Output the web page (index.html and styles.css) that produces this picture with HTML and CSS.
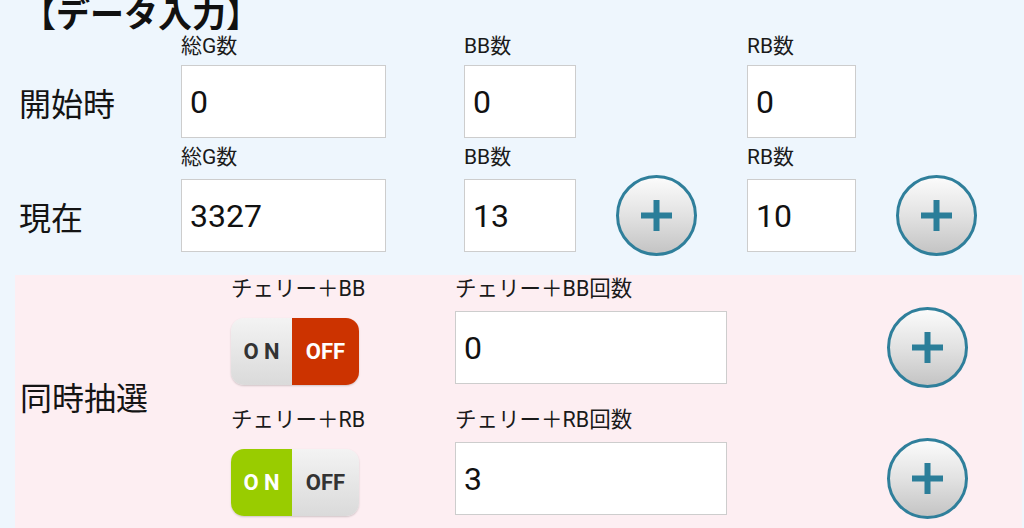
FILE: index.html
```html
<!DOCTYPE html>
<html lang="ja">
<head>
<meta charset="utf-8">
<title>データ入力</title>
<link rel="stylesheet" href="styles.css">
</head>
<body>
<div class="page">
  <h1 class="title">【データ入力】</h1>

  <section class="top">
    <div class="group g1">
      <div class="cap c2">総G数</div>
      <div class="cap c3">BB数</div>
      <div class="cap c4">RB数</div>
      <div class="rowlabel">開始時</div>
      <div class="cell"><input class="box w205" type="text" value="0" readonly></div>
      <div class="cell"><input class="box w112" type="text" value="0" readonly></div>
      <div class="cell"><input class="box w109" type="text" value="0" readonly></div>
    </div>
    <div class="group g2">
      <div class="cap c2">総G数</div>
      <div class="cap c3">BB数</div>
      <div class="cap c4">RB数</div>
      <div class="rowlabel">現在</div>
      <div class="cell"><input class="box w205" type="text" value="3327" readonly></div>
      <div class="cell">
        <input class="box w112" type="text" value="13" readonly>
        <button class="plus" type="button" aria-label="BB +1"><svg viewBox="0 0 31 31" width="31" height="31"><rect x="12.5" y="0" width="6" height="31"/><rect x="0" y="12.5" width="31" height="6"/></svg></button>
      </div>
      <div class="cell">
        <input class="box w109" type="text" value="10" readonly>
        <button class="plus" type="button" aria-label="RB +1"><svg viewBox="0 0 31 31" width="31" height="31"><rect x="12.5" y="0" width="6" height="31"/><rect x="0" y="12.5" width="31" height="6"/></svg></button>
      </div>
    </div>
  </section>

  <section class="sim">
    <div class="simlabel">同時抽選</div>

    <div class="cap s2 r1">チェリー＋BB</div>
    <div class="cap s3 r1">チェリー＋BB回数</div>
    <div class="s2 r2 tcell">
      <div class="toggle">
        <span class="half on-off">O N</span>
        <span class="half off-on">OFF</span>
      </div>
    </div>
    <div class="s3 r2 bcell"><input class="box w272" type="text" value="0" readonly></div>
    <div class="s4 r2 pcell"><button class="plus" type="button" aria-label="チェリー＋BB +1"><svg viewBox="0 0 31 31" width="31" height="31"><rect x="12.5" y="0" width="6" height="31"/><rect x="0" y="12.5" width="31" height="6"/></svg></button></div>

    <div class="cap s2 r3">チェリー＋RB</div>
    <div class="cap s3 r3">チェリー＋RB回数</div>
    <div class="s2 r4 tcell">
      <div class="toggle">
        <span class="half on-on">O N</span>
        <span class="half off-off">OFF</span>
      </div>
    </div>
    <div class="s3 r4 bcell"><input class="box w272" type="text" value="3" readonly></div>
    <div class="s4 r4 pcell"><button class="plus" type="button" aria-label="チェリー＋RB +1"><svg viewBox="0 0 31 31" width="31" height="31"><rect x="12.5" y="0" width="6" height="31"/><rect x="0" y="12.5" width="31" height="6"/></svg></button></div>
  </section>
</div>
</body>
</html>
```

FILE: styles.css
```css
html, body {
  margin: 0;
  padding: 0;
  background: #eef6fd;
  overflow: hidden;
}

body {
  font-family: Roboto, "Noto Sans CJK JP", sans-serif;
  color: #141414;
}

.page {
  width: 1024px;
}

.title {
  margin: -4px 0 0;
  padding-left: 22px;
  height: 34px;
  line-height: 34px;
  font-size: 34px;
  font-weight: 700;
  font-family: "Noto Sans CJK JP", sans-serif;
  color: #111;
  white-space: nowrap;
}

/* ---------- top section ---------- */
.group {
  display: grid;
  grid-template-columns: 181px 283px 283px 1fr;
  grid-template-rows: 20px 73px;
}

.g1 { margin-top: 6px; row-gap: 9px; }
.g2 { margin-top: 9px; row-gap: 12px; }

.cap {
  font-size: 21px;
  line-height: 20px;
  height: 20px;
  white-space: nowrap;
  color: #1a1a1a;
}

.group .c2 { grid-column: 2; grid-row: 1; }
.group .c3 { grid-column: 3; grid-row: 1; }
.group .c4 { grid-column: 4; grid-row: 1; }

.rowlabel {
  grid-column: 1;
  grid-row: 2;
  align-self: center;
  padding-left: 19px;
  font-size: 32px;
  line-height: 36px;
  font-family: "Noto Sans CJK JP", sans-serif;
}

.cell {
  grid-row: 2;
  display: flex;
  align-items: center;
}

.box {
  box-sizing: border-box;
  height: 73px;
  margin: 0;
  padding: 0 0 0 8px;
  border: 1px solid #cdcdcd;
  border-radius: 0;
  background: #fff;
  font-family: Roboto, sans-serif;
  font-size: 32px;
  color: #111;
  outline: none;
}

.w205 { width: 205px; }
.w112 { width: 112px; }
.w109 { width: 109px; }
.w272 { width: 272px; }

.plus {
  box-sizing: border-box;
  width: 81px;
  height: 81px;
  margin: 0 0 0 40px;
  padding: 0;
  border: 3px solid #2f7f9b;
  border-radius: 50%;
  background: linear-gradient(#fbfbfb, #e2e2e2 50%, #c4c4c4);
  display: flex;
  align-items: center;
  justify-content: center;
  flex: none;
}

.plus svg { fill: #2b7e99; display: block; }

/* ---------- simultaneous section ---------- */
.sim {
  margin: 23px 2px 0 15px;
  padding: 4px 0 30px;
  background: #fdeef2;
  display: grid;
  grid-template-columns: 216px 224px 432px 81px;
  grid-template-rows: auto auto auto auto;
}

.sim .r1 { grid-row: 1; }
.sim .r2 { grid-row: 2; margin-top: 8px; height: 81px; }
.sim .r3 { grid-row: 3; margin-top: 22px; }
.sim .r4 { grid-row: 4; margin-top: 8px; height: 81px; }
.sim .s2 { grid-column: 2; }
.sim .s3 { grid-column: 3; }
.sim .s4 { grid-column: 4; }

.sim .cap { font-size: 21.5px; }

.simlabel {
  grid-column: 1;
  grid-row: 1 / 5;
  align-self: center;
  padding: 0 0 6px 5px;
  font-size: 32px;
  line-height: 36px;
  font-family: "Noto Sans CJK JP", sans-serif;
}

.tcell, .bcell, .pcell {
  display: flex;
  align-items: center;
}

.pcell .plus { margin-left: 0; }

.toggle {
  display: flex;
  width: 128px;
  height: 67px;
  margin-top: 8px;
  border-radius: 13px;
  overflow: hidden;
  box-shadow: 0 1px 2px rgba(0, 0, 0, 0.18);
}

.half {
  display: flex;
  align-items: center;
  justify-content: center;
  font-family: Roboto, sans-serif;
  font-weight: 700;
  font-size: 22px;
  white-space: pre;
}

.half:first-child { width: 61px; }
.half:last-child { width: 67px; }

.on-off, .off-off {
  background: linear-gradient(#f3f3f3, #dadada);
  color: #333;
}

.off-on {
  background: #cc3300;
  color: #fff;
}

.on-on {
  background: #99cc00;
  color: #fff;
}
```
